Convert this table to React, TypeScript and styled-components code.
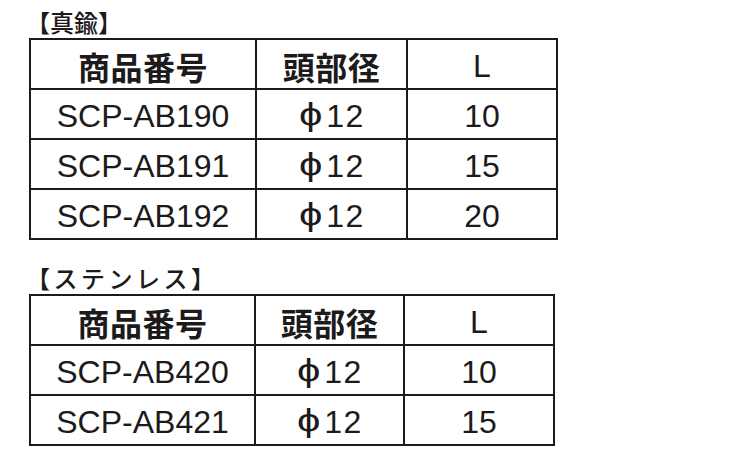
import React from 'react';
import styled, { createGlobalStyle } from 'styled-components';

const GlobalStyle = createGlobalStyle`
  html, body {
    margin: 0;
    padding: 0;
    background: #ffffff;
  }
  body {
    font-family: "Liberation Sans", Arial, "Noto Sans CJK JP", sans-serif;
    color: #1c1a1a;
  }
`;

type Spec = {
  title: string;
  spacing: number;
  cols: string;
  rows: string[][];
};

const specs: Spec[] = [
  {
    title: '【真鍮】',
    spacing: 0,
    cols: '224px 149px 148px',
    rows: [
      ['SCP-AB190', '12', '10'],
      ['SCP-AB191', '12', '15'],
      ['SCP-AB192', '12', '20'],
    ],
  },
  {
    title: '【ステンレス】',
    spacing: 3.5,
    cols: '223px 147px 148px',
    rows: [
      ['SCP-AB420', '12', '10'],
      ['SCP-AB421', '12', '15'],
    ],
  },
];

const Page = styled.div`
  width: 750px;
  height: 450px;
  padding: 7px 0 0 29px;
  box-sizing: border-box;
  display: flex;
  flex-direction: column;
`;

const Section = styled.section<{ $gap?: number }>`
  display: flex;
  flex-direction: column;
  margin-top: ${(p) => p.$gap ?? 0}px;
`;

const Title = styled.h3<{ $spacing: number }>`
  margin: 0 0 0 -3px;
  height: 31px;
  line-height: 30px;
  font-family: "Noto Sans CJK JP", sans-serif;
  font-size: 24px;
  font-weight: 500;
  letter-spacing: ${(p) => p.$spacing}px;
  color: #1c1a1a;
`;

const Table = styled.div<{ $cols: string }>`
  display: grid;
  grid-template-columns: ${(p) => p.$cols};
  grid-auto-rows: 48px;
  gap: 2px;
  padding: 2px;
  background: #1c1a1a;
  width: max-content;
`;

const Cell = styled.div<{ $cjk?: boolean }>`
  background: #ffffff;
  display: flex;
  align-items: center;
  justify-content: center;
  padding-top: ${(p) => (p.$cjk ? 3 : 5)}px;
  box-sizing: border-box;
  font-size: 32px;
  letter-spacing: ${(p) => (p.$cjk ? '0.5px' : '0')};
  font-family: ${(p) =>
    p.$cjk ? '"Noto Sans CJK JP", sans-serif' : '"Liberation Sans", Arial, sans-serif'};
  font-weight: ${(p) => (p.$cjk ? 700 : 400)};
  color: #1c1a1a;
`;

const Phi = styled.span`
  display: inline-block;
  font-family: "Noto Sans CJK JP", sans-serif;
  font-size: 31px;
  font-weight: 300;
  transform: scaleX(1.35);
  margin: 0 7px 0 2px;
  position: relative;
  top: -5px;
`;

const Num = styled.span`
  letter-spacing: 1.5px;
  margin-right: -1.5px;
`;

export default function App() {
  return (
    <>
      <GlobalStyle />
      <Page>
        {specs.map((s, i) => (
          <Section key={s.title} $gap={i === 0 ? 0 : 23}>
            <Title $spacing={s.spacing}>{s.title}</Title>
            <Table $cols={s.cols}>
              <Cell $cjk>商品番号</Cell>
              <Cell $cjk>頭部径</Cell>
              <Cell>L</Cell>
              {s.rows.map((r) => (
                <React.Fragment key={r[0]}>
                  <Cell>{r[0]}</Cell>
                  <Cell>
                    <Phi>ϕ</Phi>
                    <Num>{r[1]}</Num>
                  </Cell>
                  <Cell>{r[2]}</Cell>
                </React.Fragment>
              ))}
            </Table>
          </Section>
        ))}
      </Page>
    </>
  );
}
